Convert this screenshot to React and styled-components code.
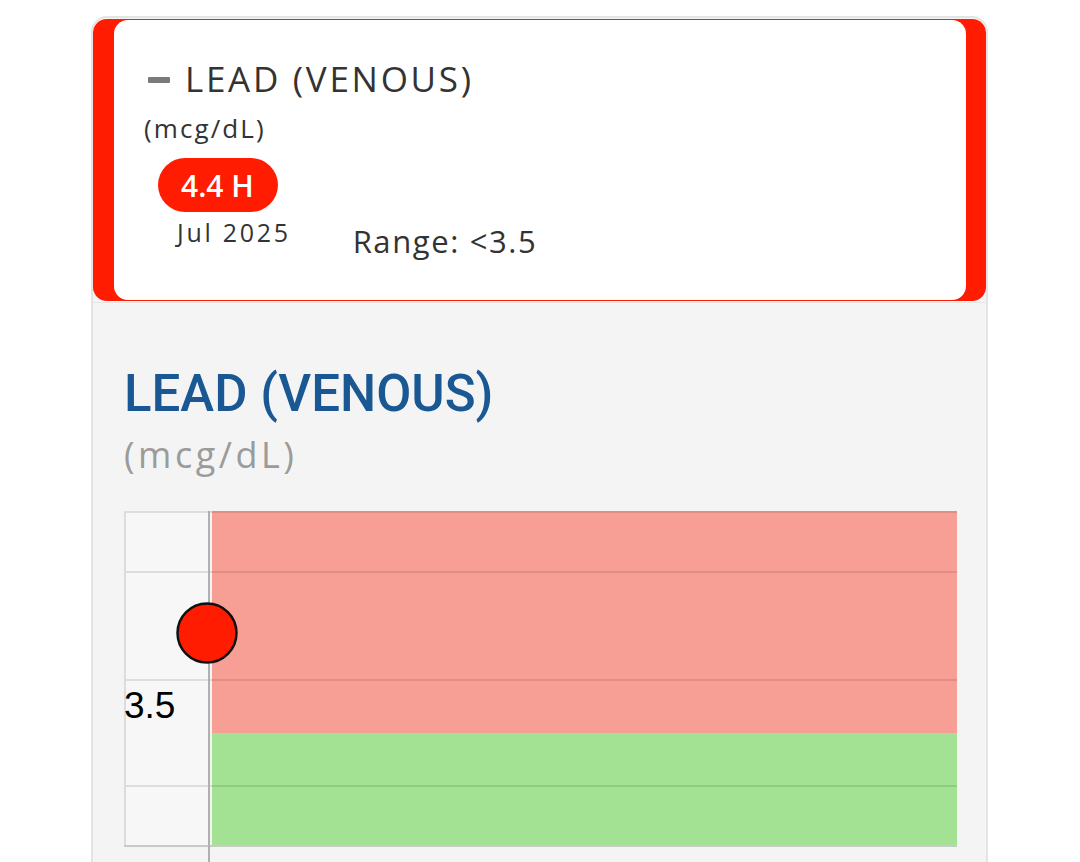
import React from "react";
import styled, { createGlobalStyle } from "styled-components";

const RED = "#ff1c00";

const GlobalStyle = createGlobalStyle`
  html, body {
    margin: 0;
    padding: 0;
    background: #ffffff;
  }
  body {
    font-family: "Open Sans", "Noto Sans", sans-serif;
    overflow: hidden;
  }
`;

const ResultChart = ({ value, limit }) => {
  const width = 833;
  const axisX = 85;
  const zoneX = 88;
  const bottom = 335;
  const limitY = 222;
  const gridLines = [61, 169, 275];

  return (
    <ChartSvg width={width} height={351} viewBox={`0 0 ${width} 351`}>
      <rect x="0" y="0" width={axisX} height={bottom} fill="#f7f7f7" />
      <rect x={zoneX} y="0" width={width - zoneX} height={limitY} fill="#f89f95" />
      <rect x={zoneX} y={limitY} width={width - zoneX} height={bottom - limitY} fill="#a3e193" />
      <line x1="0" y1="1" x2={width} y2="1" stroke="rgba(0,0,0,0.1)" strokeWidth="2" />
      {gridLines.map((y) => (
        <line key={y} x1="0" y1={y} x2={width} y2={y} stroke="rgba(0,0,0,0.1)" strokeWidth="2" />
      ))}
      <line x1="1" y1="0" x2="1" y2={bottom} stroke="#dcdcdc" strokeWidth="2" />
      <line x1="0" y1={bottom} x2={width} y2={bottom} stroke="#c9c9c9" strokeWidth="2" />
      <line x1={axisX} y1="0" x2={axisX} y2="351" stroke="#b0b0b0" strokeWidth="2" />
      <text
        x="0"
        y="207"
        fontFamily="'Liberation Sans', Arial, sans-serif"
        fontSize="37"
        fill="#000"
      >
        {limit}
      </text>
      <circle cx="83" cy="122" r="29.5" fill={RED} stroke="#111" strokeWidth="2.5" />
      <title>{value}</title>
    </ChartSvg>
  );
};

const App = () => {
  return (
    <>
      <GlobalStyle />
      <Wrapper>
        <StatusCard>
          <SummaryBody>
            <SummaryTitleRow>
              <CollapseDash />
              <SummaryTitle>LEAD (VENOUS)</SummaryTitle>
            </SummaryTitleRow>
            <SummaryUnit>(mcg/dL)</SummaryUnit>
            <SummaryResultRow>
              <ResultColumn>
                <ValueBadge>4.4 H</ValueBadge>
                <ResultDate>Jul 2025</ResultDate>
              </ResultColumn>
              <RangeText>Range: &lt;3.5</RangeText>
            </SummaryResultRow>
          </SummaryBody>
        </StatusCard>

        <DetailPanel>
          <DetailTitle>LEAD (VENOUS)</DetailTitle>
          <DetailUnit>(mcg/dL)</DetailUnit>
          <ChartWrap>
            <ResultChart value="4.4" limit="3.5" />
          </ChartWrap>
        </DetailPanel>
      </Wrapper>
    </>
  );
};

const Wrapper = styled.div`
  width: 897px;
  box-sizing: border-box;
  margin: 16px 0 0 91px;
  border: 2px solid #e4e4e4;
  border-radius: 16px;
  overflow: hidden;
  background: #f4f4f4;
`;

const StatusCard = styled.div`
  margin-top: 1px;
  padding: 1px 20px 1px 21px;
  background: ${RED};
  border-radius: 14px;
`;

const SummaryBody = styled.div`
  height: 280px;
  box-sizing: border-box;
  padding: 39px 0 0 30px;
  background: #ffffff;
  border-radius: 14px;
  color: #333333;
`;

const SummaryTitleRow = styled.div`
  display: flex;
  align-items: center;
  gap: 15px;
  height: 40px;
  padding-left: 4px;
`;

const CollapseDash = styled.span`
  display: block;
  width: 22px;
  height: 6px;
  border-radius: 1px;
  background: #7a7a7a;
  margin-top: 2px;
`;

const SummaryTitle = styled.div`
  font-size: 35px;
  line-height: 40px;
  letter-spacing: 2.7px;
  font-weight: 400;
`;

const SummaryUnit = styled.div`
  margin-top: 14px;
  font-size: 26px;
  line-height: 30px;
  letter-spacing: 2.1px;
`;

const SummaryResultRow = styled.div`
  display: flex;
  align-items: flex-end;
  margin-top: 15px;
`;

const ResultColumn = styled.div`
  display: flex;
  flex-direction: column;
  align-items: flex-start;
`;

const ValueBadge = styled.div`
  margin-left: 14px;
  height: 54px;
  padding: 0 24px 0 23px;
  display: flex;
  align-items: center;
  border-radius: 27px;
  background: ${RED};
  color: #ffffff;
  font-size: 30px;
  font-weight: 600;
`;

const ResultDate = styled.div`
  margin: 5px 0 0 33px;
  font-size: 25px;
  line-height: 30px;
  letter-spacing: 2.7px;
`;

const RangeText = styled.div`
  margin: 0 0 -12px 62px;
  font-size: 31px;
  line-height: 36px;
  letter-spacing: 1.6px;
`;

const DetailPanel = styled.div`
  margin-top: 1px;
  padding: 62px 29px 40px 31px;
  border-top: 1px solid #e6e6e6;
`;

const DetailTitle = styled.h1`
  margin: 0;
  font-family: Roboto, "Liberation Sans", sans-serif;
  font-size: 51px;
  line-height: 58px;
  font-weight: 500;
  color: #1a5894;
`;

const DetailUnit = styled.div`
  margin-top: 10px;
  font-size: 36px;
  line-height: 44px;
  letter-spacing: 3.5px;
  color: #9b9b9b;
`;

const ChartWrap = styled.div`
  margin-top: 34px;
`;

const ChartSvg = styled.svg`
  display: block;
  overflow: visible;
`;

export default App;
